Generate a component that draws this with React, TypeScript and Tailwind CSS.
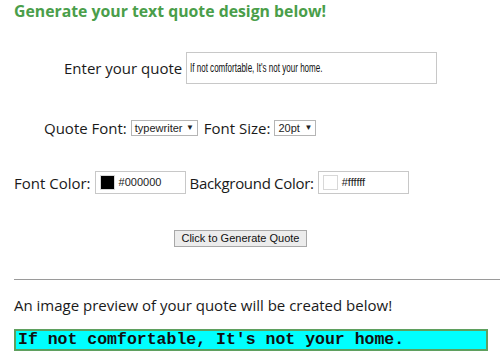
const label = "text-[15px] leading-[20px] text-[#1a1a1a]";

function ColorField({ color, value }: { color: string; value: string }) {
  return (
    <div className="flex h-[23px] w-[91px] items-center gap-[4px] border border-[#c8c8c8] bg-white pl-[4px]">
      <span
        className="h-[15px] w-[15px] border border-[#d8d8d8]"
        style={{ backgroundColor: color }}
      />
      <span className="font-['Liberation_Sans',Arial,sans-serif] text-[11px] text-[#222]">{value}</span>
    </div>
  );
}

function Select({ value, width }: { value: string; width: string }) {
  return (
    <div
      className={`flex h-[16px] ${width} items-center justify-between border border-[#b5b5b5] bg-white px-[3px] font-['Liberation_Sans',Arial,sans-serif] text-[11px] text-[#222]`}
    >
      <span>{value}</span>
      <span className="text-[8px]">▼</span>
    </div>
  );
}

export default function App() {
  return (
    <div className="h-[360px] w-[500px] overflow-hidden bg-white pl-[14px] font-['Open_Sans','DejaVu_Sans',sans-serif]">
      <h1 className="pt-[1px] text-[15.8px] leading-[20px] font-bold text-[#4a9e4a]">
        Generate your text quote design below!
      </h1>

      <div className="mt-[31px] ml-[50px] flex h-[32px] items-center gap-[4px]">
        <span className={label}>Enter your quote</span>
        <div className="flex h-[32px] w-[251px] items-center overflow-hidden border border-[#c8c8c8] px-[3px] font-['Liberation_Sans',Arial,sans-serif] text-[12px] text-[#111]">
          <span className="inline-block origin-left scale-x-[0.67] whitespace-nowrap">
            If not comfortable, It's not your home.
          </span>
        </div>
      </div>

      <div className="mt-[34px] ml-[30px] flex h-[20px] items-center gap-[4px]">
        <span className={label}>Quote Font:</span>
        <Select value="typewriter" width="w-[67px]" />
        <span className={`${label} ml-[2px]`}>Font Size:</span>
        <Select value="20pt" width="w-[42px]" />
      </div>

      <div className="mt-[33px] flex h-[23px] items-center gap-[4px]">
        <span className={label}>Font Color:</span>
        <ColorField color="#000000" value="#000000" />
        <span className={`${label} tracking-[-0.3px]`}>Background Color:</span>
        <ColorField color="#ffffff" value="#ffffff" />
      </div>

      <div className="mt-[36px] ml-[160px] flex h-[17px]">
        <button className="h-[17px] w-[133px] border border-[#a8a8a8] bg-[#ececec] font-['Liberation_Sans',Arial,sans-serif] text-[11px] leading-[15px] text-[#111]">
          Click to Generate Quote
        </button>
      </div>

      <hr className="mt-[32px] border-t border-[#9a9a9a]" />

      <p className={`${label} mt-[15px]`}>An image preview of your quote will be created below!</p>

      <div className="mt-[14px] flex h-[22px] w-[474px] items-center border-2 border-[#5fa05f] bg-[#00ffff] pl-[2px] font-['Liberation_Mono','Courier_New',monospace] text-[16.5px] leading-none font-bold text-[#111]">
        If not comfortable, It's not your home.
      </div>
    </div>
  );
}
